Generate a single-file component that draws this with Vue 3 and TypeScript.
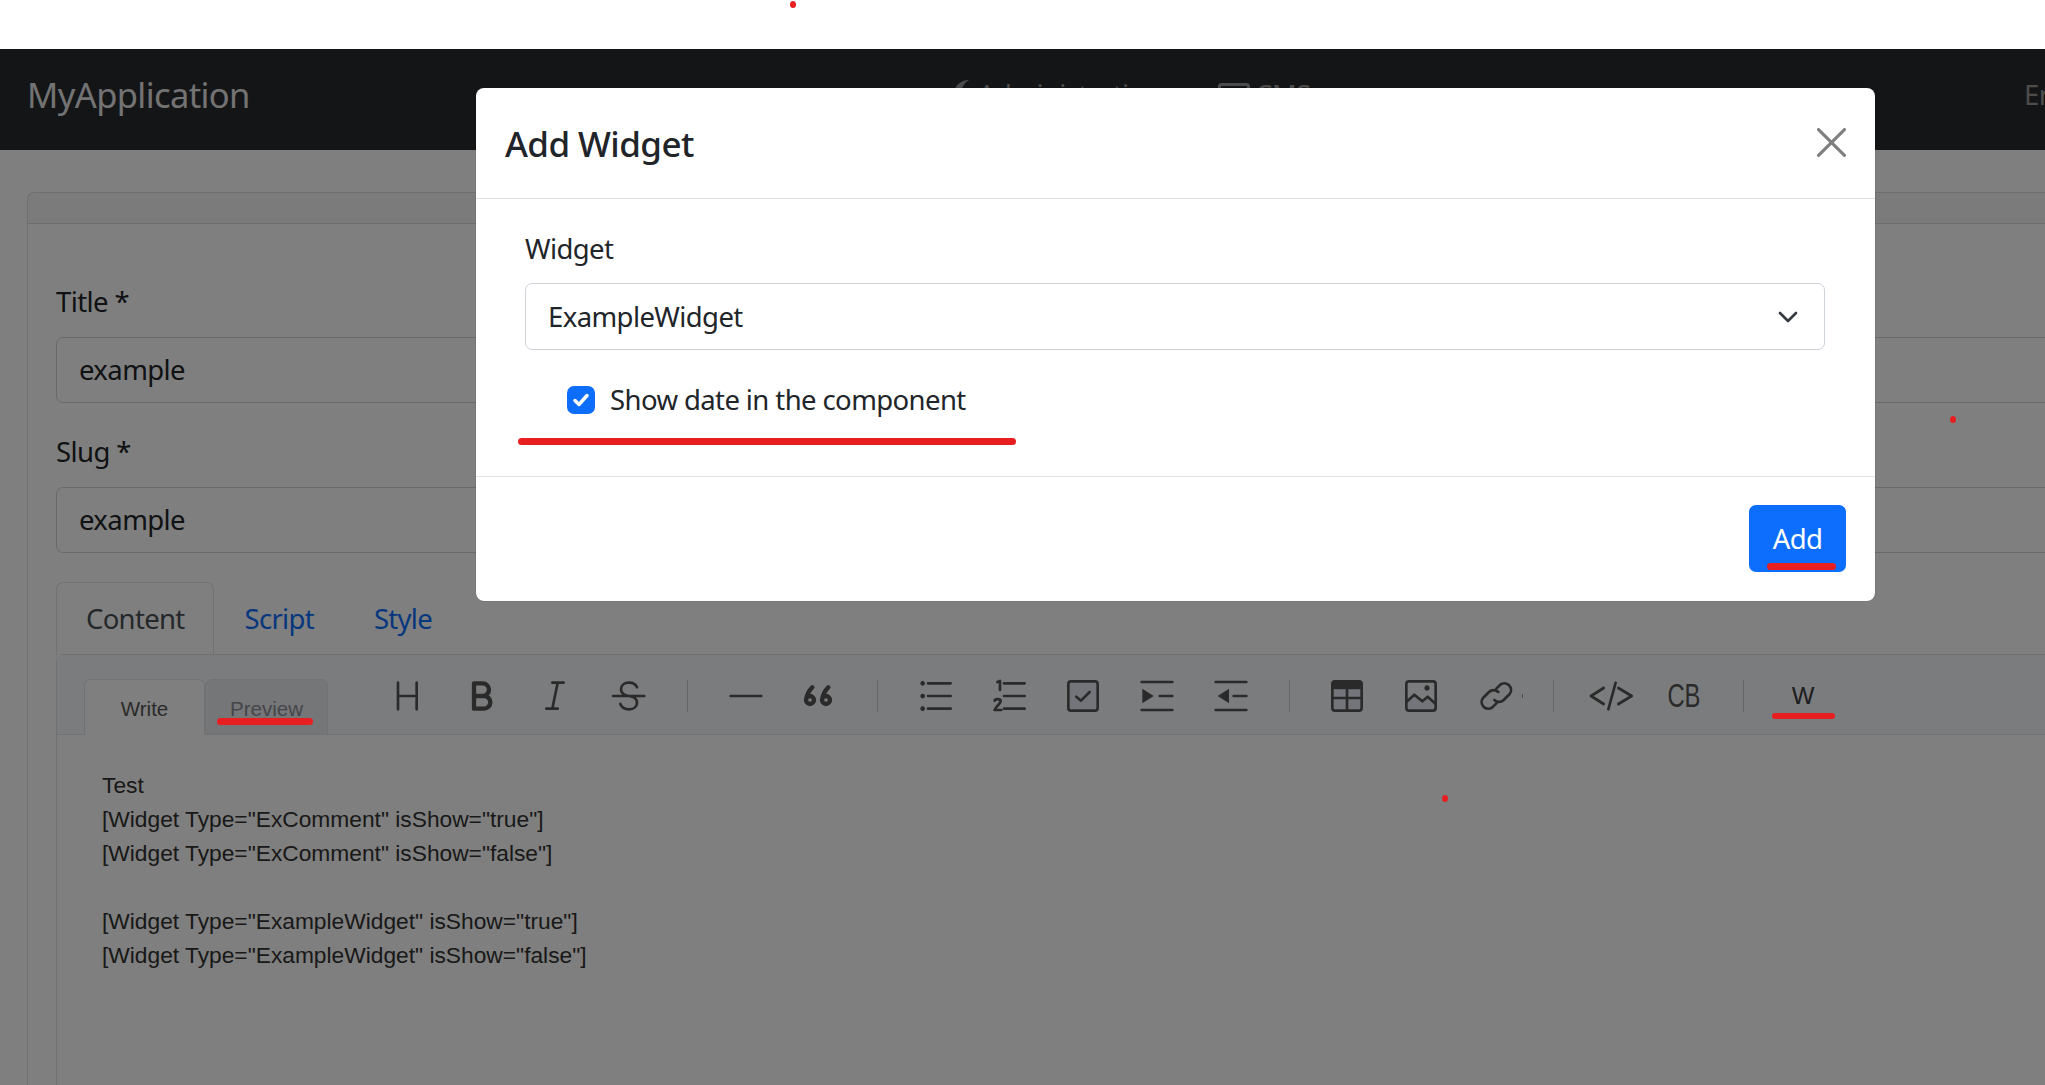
<script setup lang="ts">
interface Tool {
  name: string
  d?: string // stroked
  solid?: string // filled with the icon colour
  tint?: string // pale fill behind the strokes
  text?: string
  heavy?: boolean
}

type Item = Tool | 'divider'

const frame = 'M6 2h36a4 4 0 0 1 4 4v36a4 4 0 0 1-4 4H6a4 4 0 0 1-4-4V6a4 4 0 0 1 4-4z'

const tools: Item[] = [
  { name: 'heading', d: 'M9 4v40M37 4v40M9 24h28' },
  { name: 'bold', heavy: true, d: 'M12 5h13a9 9 0 0 1 0 19H12zM12 24h15a9.500 9.500 0 0 1 0 19H12z' },
  { name: 'italic', d: 'M20 4h17M11 43h17M28 4l-8 39' },
  { name: 'strike', d: 'M0 24h47M36 11c-2-5-6-7-12-7-7 0-12 4-12 10 0 6 5 9 12 10 7 1 12 4 12 10 0 6-5 10-12 10-6 0-11-3-13-8' },
  'divider',
  { name: 'hr', d: 'M1 24h46' },
  { name: 'quote', heavy: true, d: 'M16.500 30a6 6 0 1 1-12 0a6 6 0 1 1 12 0M14 11c-4 4-8 9-9.500 19M40.500 30a6 6 0 1 1-12 0a6 6 0 1 1 12 0M38 11c-4 4-8 9-9.500 19' },
  'divider',
  { name: 'ul', d: 'M12 5h34M12 24h34M12 43h34', solid: 'M4 1.500a3.500 3.500 0 1 0 .01 0zM4 20.500a3.500 3.500 0 1 0 .01 0zM4 39.500a3.500 3.500 0 1 0 .01 0z' },
  { name: 'ol', d: 'M15 5h31M15 24h31M15 43h31M5 3l4-1.500V15M1 31c1-3 8-3 9 0 1 4-8 9-9 14h10' },
  { name: 'task', d: frame + 'M14 25l7 6 13-13', tint: frame },
  { name: 'indent', d: 'M1 3h46M1 45h46M28 24h19', solid: 'M2 13l17 11-17 11z' },
  { name: 'outdent', d: 'M1 3h46M1 45h46M28 24h19', solid: 'M21 13L4 24l17 11z' },
  'divider',
  { name: 'table', d: frame + 'M24 14v32M2 27h44', solid: 'M6 2h36a4 4 0 0 1 4 4v8H2V6a4 4 0 0 1 4-4z', tint: frame },
  { name: 'image', d: frame + 'M2 33l12-11 12 10 8-7 12 11', solid: 'M33 8a4 4 0 1 0 .01 0z', tint: 'M2 33l12-11 12 10 8-7 12 11v8H2z' },
  { name: 'link', d: 'M26 13l6-6a10 10 0 0 1 14 14l-9 9a10 10 0 0 1-14 0M26 35l-6 6A10 10 0 0 1 6 27l9-9a10 10 0 0 1 14 0' },
  'divider',
  { name: 'code', d: 'M13 12L-6 24l19 12M35 12l20 12-20 12M31 4l-11 40' },
  { name: 'codeblock', text: 'CB' },
  'divider',
  { name: 'widget', text: 'W' }
]
</script>

<template>
  <div class="shot">
    <div class="top-strip"></div>

    <div class="app">
      <nav class="navbar">
        <a class="brand">MyApplication</a>
        <ul class="nav-links">
          <li class="nav-admin">
            <svg class="icon-admin" viewBox="0 0 20 28"><path d="M16 0C8 0 1 6 1 14s7 14 15 14c-5-3-8-8-8-14S11 3 16 0z" /></svg>
            Administration
          </li>
          <li class="nav-cms">
            <svg class="icon-cms" viewBox="0 0 32 24"><rect x="1.500" y="1.500" width="29" height="21" rx="2" /></svg>
            CMS
          </li>
        </ul>
        <span class="lang">English</span>
      </nav>

      <main class="page">
        <section class="card">
          <header class="card-header"></header>
          <div class="card-body">
            <label class="field-label">Title *</label>
            <div class="field-input">example</div>
            <label class="field-label slug-label">Slug *</label>
            <div class="field-input">example</div>

            <ul class="tabs">
              <li class="tab active">Content</li>
              <li class="tab">Script</li>
              <li class="tab">Style</li>
            </ul>

            <div class="editor">
              <div class="toolbar">
                <div class="mode mode-write">Write</div>
                <div class="mode mode-preview">Preview</div>
                <div class="tools">
                  <template v-for="(item, index) in tools" :key="index">
                    <span v-if="item === 'divider'" class="divider"></span>
                    <span v-else class="tool">
                      <span v-if="item.text" class="tool-text" :class="item.name">{{ item.text }}</span>
                      <svg v-else :class="{ heavy: item.heavy }" viewBox="0 0 48 48" width="32" height="32">
                        <path v-if="item.tint" class="tint" :d="item.tint" />
                        <path v-if="item.solid" class="solid" :d="item.solid" />
                        <path :d="item.d" />
                      </svg>
                    </span>
                  </template>
                </div>
              </div>
              <div class="source">
                <div>Test</div>
                <div>[Widget Type="ExComment" isShow="true"]</div>
                <div>[Widget Type="ExComment" isShow="false"]</div>
                <div class="blank"></div>
                <div>[Widget Type="ExampleWidget" isShow="true"]</div>
                <div>[Widget Type="ExampleWidget" isShow="false"]</div>
              </div>
            </div>
          </div>
        </section>
      </main>

      <div class="backdrop"></div>

      <div class="modal">
        <header class="modal-header">
          <h5 class="modal-title">Add Widget</h5>
          <button class="close" aria-label="Close">
            <svg viewBox="0 0 28 28" width="29" height="29"><path d="M1.500 1.500l25 25M26.500 1.500l-25 25" /></svg>
          </button>
        </header>
        <div class="modal-body">
          <label class="modal-label">Widget</label>
          <div class="select">
            <span>ExampleWidget</span>
            <svg viewBox="0 0 20 12" width="20" height="12"><path d="M2 2l8 8 8-8" /></svg>
          </div>
          <label class="check-row">
            <span class="checkbox">
              <svg viewBox="0 0 20 20" width="20" height="20"><path d="M4 10.500l4 4 8-9" /></svg>
            </span>
            Show date in the component
          </label>
        </div>
        <footer class="modal-footer">
          <button class="btn-add">Add</button>
        </footer>
      </div>
    </div>

    <!-- red annotations drawn on top of the screenshot -->
    <span class="ink dot dot-top"></span>
    <span class="ink dot dot-right"></span>
    <span class="ink dot dot-middle"></span>
    <span class="ink line line-check"></span>
    <span class="ink line line-add"></span>
    <span class="ink line line-preview"></span>
    <span class="ink line line-widget"></span>
    <span class="speck"></span>
  </div>
</template>

<style>
body {
  margin: 0;
  background: #fff;
}
</style>

<style scoped>
.shot {
  position: relative;
  width: 2045px;
  height: 1085px;
  overflow: hidden;
  background: #fff;
  font-family: "Noto Sans", "Open Sans", sans-serif;
  font-size: 27.500px;
  line-height: 40px;
  letter-spacing: -0.6px;
  color: #212529;
}
.top-strip {
  height: 49px;
}
.app {
  position: relative;
  height: 1036px;
  overflow: hidden;
}

.navbar {
  display: flex;
  align-items: center;
  width: 2400px;
  height: 101px;
  box-sizing: border-box;
  padding: 0 0 10px 27px;
  background: #282a2e;
}
.brand {
  width: 926px;
  font-size: 34.500px;
  letter-spacing: -0.6px;
  color: #e6e6e6;
}
.nav-links {
  display: flex;
  list-style: none;
  margin: 0;
  padding: 0;
  color: #999;
}
.nav-links li {
  display: flex;
  align-items: center;
  gap: 5px;
}
.nav-admin {
  width: 265px;
}
.nav-cms {
  width: 806px;
}
.icon-admin {
  width: 20px;
  height: 28px;
  margin-top: -2px;
  fill: currentColor;
}
.icon-cms {
  width: 32px;
  height: 24px;
  fill: none;
  stroke: currentColor;
  stroke-width: 3;
}
.lang {
  color: #999;
}

.page {
  padding: 42px 0 0 27px;
}
.card {
  width: 2300px;
  border: 1px solid rgba(0, 0, 0, 0.125);
  border-radius: 7px;
  box-sizing: border-box;
}
.card-header {
  height: 30px;
  background: rgba(0, 0, 0, 0.03);
  border-bottom: 1px solid rgba(0, 0, 0, 0.125);
}
.card-body {
  display: flex;
  flex-direction: column;
  padding: 58px 28px 0;
}
.field-label {
  margin-bottom: 15px;
}
.slug-label {
  margin-top: 29px;
}
.field-input {
  height: 64px;
  padding-left: 22px;
  line-height: 64px;
  border: 1px solid #ced4da;
  border-radius: 7px;
  background: #fff;
}

.tabs {
  display: flex;
  list-style: none;
  margin: 29px 0 0;
  padding: 0;
  height: 73px;
  color: #0d6efd;
  letter-spacing: -0.7px;
}
.tab {
  padding: 0 29px;
  line-height: 71px;
  border: 1px solid transparent;
  border-bottom: 0;
  border-radius: 7px 7px 0 0;
}
.tab.active {
  color: #495057;
  border-color: #dee2e6;
  background: #fff;
}

.editor {
  border: 1px solid #dee2e6;
  border-radius: 7px 7px 0 0;
  height: 600px;
  margin-top: -1px;
  background: #fff;
  font-family: "Liberation Sans", Arial, sans-serif;
  letter-spacing: 0;
}
.toolbar {
  display: flex;
  align-items: flex-end;
  height: 80px;
  box-sizing: border-box;
  padding-left: 27px;
  background: #f7f8fa;
  border-bottom: 1px solid #e1e4e8;
}
.mode {
  height: 56px;
  margin-bottom: -1px;
  box-sizing: border-box;
  border: 1px solid #e1e4e8;
  border-radius: 7px 7px 0 0;
  font-size: 20.500px;
  line-height: 58px;
  text-align: center;
}
.mode-write {
  width: 121px;
  color: #555;
  background: #fff;
  border-bottom-color: #fff;
}
.mode-preview {
  width: 123px;
  color: #8a8d94;
  background: #eaecef;
}
.tools {
  display: flex;
  align-items: center;
  margin-left: 43px;
  height: 79px;
}
.tool {
  display: flex;
  justify-content: center;
  align-items: center;
  width: 73.800px;
  height: 32px;
  margin-top: 3px;
}
.tool svg {
  overflow: visible;
  fill: none;
  stroke: #555;
  stroke-width: 4;
  stroke-linecap: round;
  stroke-linejoin: round;
}
.tool svg.heavy {
  stroke-width: 6.500;
}
.tool .solid {
  fill: #555;
  stroke: none;
  fill-rule: evenodd;
}
.tool .tint {
  fill: #e9ebf5;
  stroke: none;
}
.tool-text {
  color: #555;
}
/* the reference glyphs are tall and condensed */
.codeblock {
  font-size: 33px;
  transform: scaleX(0.72);
  margin-left: -3px;
}
.widget {
  font-size: 24px;
  color: #3a3a3a;
  margin-left: 3px;
}
.divider {
  width: 1px;
  height: 32px;
  margin: 3px 20.800px 0;
  background: #c9cdd2;
}
.source {
  padding: 33px 45px;
  font-size: 22.750px;
  line-height: 34px;
  color: #333;
}
.blank {
  height: 34px;
}

.backdrop {
  position: absolute;
  inset: 0;
  background: rgba(0, 0, 0, 0.5);
}

.modal {
  position: absolute;
  left: 476px;
  top: 39px;
  width: 1399px;
  box-sizing: border-box;
  background: #fff;
  border-radius: 8px;
  box-shadow: 0 0 1px rgba(0, 0, 0, 0.6);
}
.modal-header {
  display: flex;
  justify-content: space-between;
  align-items: center;
  height: 111px;
  box-sizing: border-box;
  padding: 0 29px;
  border-bottom: 1px solid #dee2e6;
}
.modal-title {
  margin: 0;
  font-size: 35px;
  font-weight: 500;
  line-height: 48px;
  padding-top: 1px;
}
.close {
  display: flex;
  padding: 0;
  margin-top: -1px;
  border: 0;
  background: none;
}
.close svg {
  fill: none;
  stroke: #7f7f7f;
  stroke-width: 3;
  stroke-linecap: round;
}
.modal-body {
  display: flex;
  flex-direction: column;
  padding: 30px 50px 56px 49px;
}
.modal-label {
  margin-bottom: 14px;
}
.select {
  display: flex;
  justify-content: space-between;
  align-items: center;
  height: 67px;
  box-sizing: border-box;
  padding: 0 26px 0 22px;
  border: 1px solid #ced4da;
  border-radius: 7px;
}
.select svg {
  fill: none;
  stroke: #343a40;
  stroke-width: 2.600;
  stroke-linecap: round;
  stroke-linejoin: round;
}
.check-row {
  display: flex;
  align-items: center;
  gap: 15px;
  margin-top: 30px;
  padding-left: 42px;
}
.checkbox {
  display: flex;
  justify-content: center;
  align-items: center;
  width: 28px;
  height: 28px;
  background: #0d6efd;
  border-radius: 7px;
}
.checkbox svg {
  fill: none;
  stroke: #fff;
  stroke-width: 3.500;
  stroke-linecap: round;
  stroke-linejoin: round;
}
.modal-footer {
  display: flex;
  justify-content: flex-end;
  padding: 28px 29px 29px;
  border-top: 1px solid #dee2e6;
}
.btn-add {
  width: 97px;
  height: 67px;
  padding: 0;
  border: 0;
  border-radius: 7px;
  background: #0d6efd;
  color: #fff;
  font: inherit;
  letter-spacing: inherit;
}

.ink {
  position: absolute;
  background: #e81f20;
}
.speck {
  position: absolute;
  left: 1522px;
  top: 694px;
  width: 1px;
  height: 4px;
  background: #4a4a4c;
}
.dot {
  width: 6px;
  height: 7px;
  border-radius: 50%;
}
.dot-top {
  left: 790px;
  top: 1px;
}
.dot-right {
  left: 1950px;
  top: 416px;
}
.dot-middle {
  left: 1442px;
  top: 795px;
}
.line {
  border-radius: 4px;
}
.line-check {
  left: 518px;
  top: 438px;
  width: 498px;
  height: 7px;
}
.line-add {
  left: 1767px;
  top: 563px;
  width: 69px;
  height: 7px;
}
.line-preview {
  left: 217px;
  top: 718px;
  width: 96px;
  height: 7px;
}
.line-widget {
  left: 1772px;
  top: 713px;
  width: 63px;
  height: 6px;
}
</style>
